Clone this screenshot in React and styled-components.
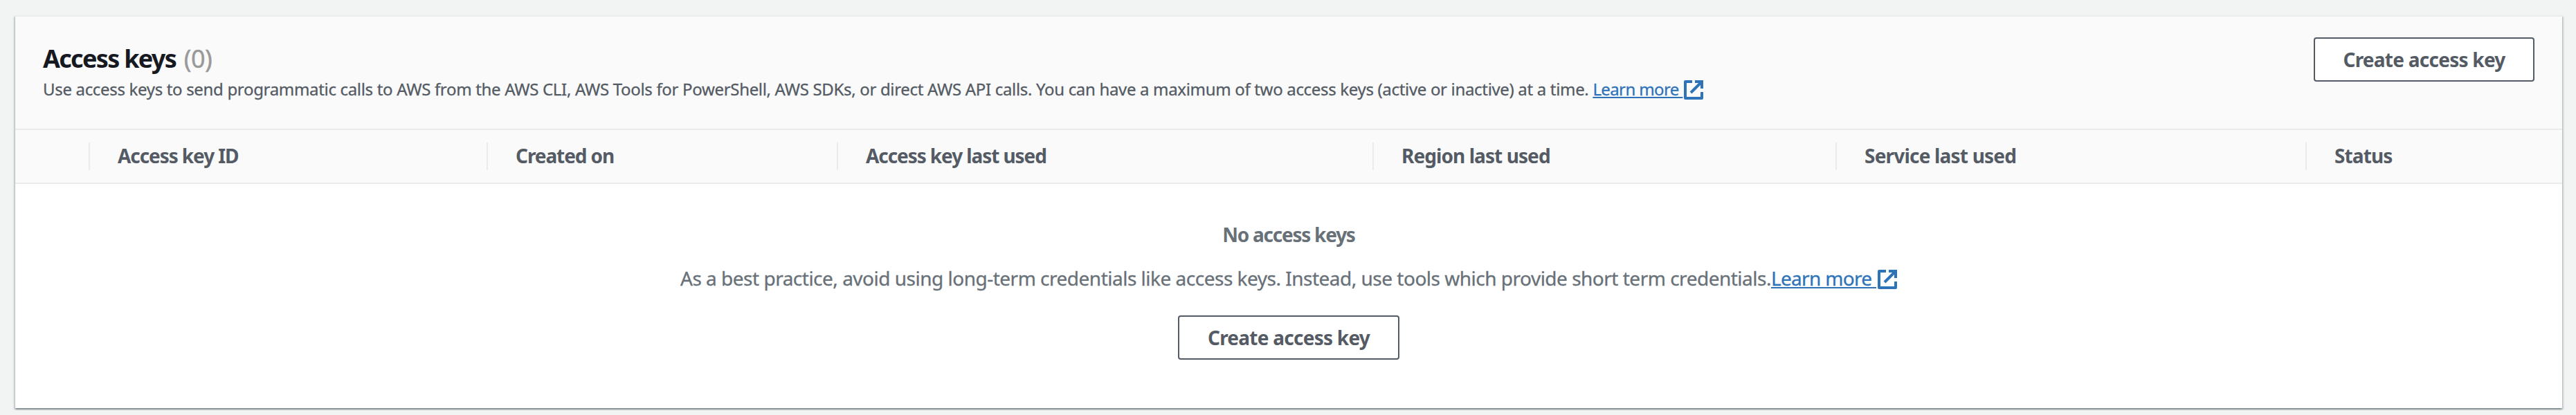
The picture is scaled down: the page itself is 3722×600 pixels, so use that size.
import React from "react";
import styled, { createGlobalStyle } from "styled-components";

const Global = createGlobalStyle`
  * { box-sizing: border-box; }
  body {
    margin: 0;
    height: 600px;
    overflow: hidden;
    background: #f2f3f3;
    font-family: "Noto Sans", "Open Sans", sans-serif;
    color: #545b64;
  }
`;

const Page = styled.main`
  height: 600px;
  padding: 22px 20px 10px 22px;
`;

const Card = styled.section`
  height: 568px;
  background: #fff;
  border-top: 2px solid #ebebeb;
  box-shadow: 0 2px 2px 0 rgba(0, 28, 36, 0.3), 2px 2px 2px 0 rgba(0, 28, 36, 0.15),
    -2px 2px 2px 0 rgba(0, 28, 36, 0.15);
`;

const Header = styled.header`
  display: flex;
  justify-content: space-between;
  align-items: flex-start;
  height: 164px;
  padding: 30px 40px 0;
  background: #fafafa;
  border-bottom: 2px solid #ebebeb;
`;

const Title = styled.h2`
  margin: 3px 0 0;
  font-size: 36px;
  line-height: 56px;
  font-weight: 700;
  letter-spacing: -1.7px;
  color: #16191f;
  white-space: pre;
`;

const Counter = styled.span`
  margin-left: 4px;
  font-weight: 400;
  letter-spacing: -0.6px;
  color: #999;
  -webkit-text-stroke: 0.4px currentColor;
`;

const Description = styled.p`
  margin: -4px 0 0;
  font-size: 24px;
  line-height: 40px;
  letter-spacing: -0.325px;
  white-space: pre;
  -webkit-text-stroke: 0.3px currentColor;
`;

const Link = styled.a`
  color: #2e73b8;
  letter-spacing: ${(p) => p.$spacing};
  text-decoration: underline;
  text-decoration-thickness: 2px;
  text-underline-offset: 2px;
  text-decoration-skip-ink: none;
`;

const Icon = styled.svg`
  width: 28px;
  height: 28px;
  margin-left: 2px;
  vertical-align: ${(p) => p.$drop};
`;

const Button = styled.button`
  width: ${(p) => p.$width || "319px"};
  height: 64px;
  padding: 0;
  border: 2px solid #545b64;
  border-radius: 4px;
  background: #fff;
  color: #545b64;
  font: 700 28px/40px "Noto Sans", sans-serif;
  letter-spacing: -0.75px;
`;

const Columns = styled.div`
  display: grid;
  grid-template-columns: 106px 575px 506px 774px 669px 679px 371px;
  height: 78px;
  padding-top: 18px;
  background: #fafafa;
  border-bottom: 2px solid #ebebeb;
`;

const Column = styled.div`
  height: 40px;
  padding-left: 40px;
  border-left: ${(p) => (p.$first ? "0" : "2px solid #ebebeb")};
  font-size: 28px;
  line-height: 39px;
  font-weight: 700;
  letter-spacing: ${(p) => p.$spacing || "-1.08px"};
  white-space: nowrap;
`;

const Empty = styled.div`
  display: flex;
  flex-direction: column;
  align-items: center;
  padding-top: 53px;
  color: #687078;
  font-size: 28px;
  line-height: 40px;
`;

const EmptyTitle = styled.strong`
  letter-spacing: -1.25px;
`;

const EmptyText = styled.p`
  height: 40px;
  margin: 23px 0 34px;
  letter-spacing: -0.5px;
  white-space: pre;
  -webkit-text-stroke: 0.3px currentColor;
`;

function ExternalIcon({ drop }) {
  return (
    <Icon $drop={drop} viewBox="0 0 28 28" fill="none" stroke="#2e73b8" strokeWidth="4">
      <path d="M12 2H2v24h24v-9" strokeLinejoin="round" />
      <path d="M16 2h10v10M26 2L10 18" />
    </Icon>
  );
}

const COLUMNS = [
  { name: "" },
  { name: "Access key ID" },
  { name: "Created on" },
  { name: "Access key last used" },
  { name: "Region last used", spacing: "-0.92px" },
  { name: "Service last used", spacing: "-0.8px" },
  { name: "Status", spacing: "-0.9px" },
];

export default function App() {
  return (
    <>
      <Global />
      <Page>
        <Card>
          <Header>
            <div>
              <Title>Access keys <Counter>(0)</Counter></Title>
              <Description>
                Use access keys to send programmatic calls to AWS from the AWS CLI, AWS Tools for PowerShell, AWS SDKs, or direct AWS API calls. You can have a maximum of two access keys (active or inactive) at a time.{" "}
                <Link $spacing="-0.61px">Learn more </Link><ExternalIcon drop="-6px" />
              </Description>
            </div>
            <Button>Create access key</Button>
          </Header>
          <Columns>
            {COLUMNS.map(({ name, spacing }, i) => (
              <Column key={i} $first={i === 0} $spacing={spacing}>{name}</Column>
            ))}
          </Columns>
          <Empty>
            <EmptyTitle>No access keys</EmptyTitle>
            <EmptyText>
              As a best practice, avoid using long-term credentials like access keys. Instead, use tools which provide short term credentials.
              <Link $spacing="-0.68px">Learn more </Link><ExternalIcon drop="-5px" />
            </EmptyText>
            <Button $width="320px">Create access key</Button>
          </Empty>
        </Card>
      </Page>
    </>
  );
}
